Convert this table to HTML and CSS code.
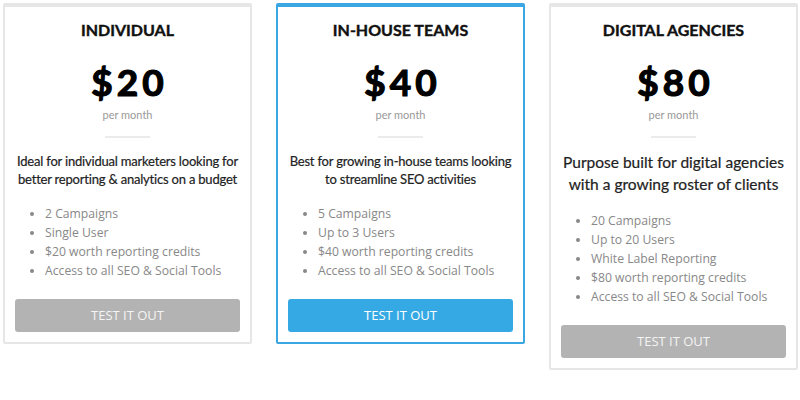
FILE: index.html
```html
<!DOCTYPE html>
<html>
<head>
<meta charset="utf-8">
<link rel="stylesheet" href="styles.css">
</head>
<body>
<div class="plans">
  <div class="card">
    <h2 class="title">INDIVIDUAL</h2>
    <div class="price">$20</div>
    <div class="period">per month</div>
    <div class="divider"></div>
    <p class="desc">Ideal for individual marketers looking for better reporting &amp; analytics on a budget</p>
    <ul class="features">
      <li>2 Campaigns</li>
      <li>Single User</li>
      <li>$20 worth reporting credits</li>
      <li>Access to all SEO &amp; Social Tools</li>
    </ul>
    <a class="btn">TEST IT OUT</a>
  </div>
  <div class="card featured">
    <h2 class="title">IN-HOUSE TEAMS</h2>
    <div class="price">$40</div>
    <div class="period">per month</div>
    <div class="divider"></div>
    <p class="desc">Best for growing in-house teams looking to streamline SEO activities</p>
    <ul class="features">
      <li>5 Campaigns</li>
      <li>Up to 3 Users</li>
      <li>$40 worth reporting credits</li>
      <li>Access to all SEO &amp; Social Tools</li>
    </ul>
    <a class="btn btn-primary">TEST IT OUT</a>
  </div>
  <div class="card">
    <h2 class="title">DIGITAL AGENCIES</h2>
    <div class="price">$80</div>
    <div class="period">per month</div>
    <div class="divider"></div>
    <p class="desc desc-large">Purpose built for digital agencies with a growing roster of clients</p>
    <ul class="features">
      <li>20 Campaigns</li>
      <li>Up to 20 Users</li>
      <li>White Label Reporting</li>
      <li>$80 worth reporting credits</li>
      <li>Access to all SEO &amp; Social Tools</li>
    </ul>
    <a class="btn">TEST IT OUT</a>
  </div>
</div>
</body>
</html>
```
FILE: styles.css
```css
* { box-sizing: border-box; }
body {
  margin: 0;
  background: #ffffff;
  font-family: "Lato", "Open Sans", sans-serif;
}
.plans {
  display: grid;
  grid-template-columns: repeat(3, 249px);
  column-gap: 24px;
  align-items: start;
  padding: 3px 0 0 3px;
}
.card {
  border: 2px solid #e6e6e6;
  border-top-width: 4px;
  border-radius: 2px;
  padding: 0 10px 10px;
  display: flex;
  flex-direction: column;
  align-items: center;
  text-align: center;
}
.card.featured {
  border-color: #3aa7e2;
}
.title {
  margin: 13px 0 0;
  font-size: 16px;
  line-height: 20px;
  font-weight: 700;
  -webkit-text-stroke: 0.4px #111;
  color: #111;
}
.price {
  margin-top: 22px;
  font-size: 37px;
  line-height: 40px;
  font-weight: 700;
  letter-spacing: 4px;
  padding-left: 4px;
  -webkit-text-stroke: 1.2px #000;
  color: #000;
}
.period {
  margin-top: 6px;
  font-size: 11px;
  line-height: 14px;
  color: #999;
}
.divider {
  width: 45px;
  height: 2px;
  background: #ebebeb;
  margin-top: 14px;
}
.desc {
  margin: 14px 0 0;
  font-size: 13px;
  letter-spacing: -0.2px;
  line-height: 18px;
  -webkit-text-stroke: 0.2px #222;
  color: #222;
}
.desc-large {
  font-size: 15.5px;
  letter-spacing: 0;
  line-height: 21.5px;
}
.features {
  align-self: stretch;
  text-align: left;
  margin: 16px 0 0;
  padding: 0 0 0 30px;
  font-family: "Open Sans", sans-serif;
  font-size: 12.2px;
  line-height: 19px;
  color: #888;
}
.btn {
  align-self: stretch;
  margin-top: 19px;
  height: 33px;
  border-radius: 3px;
  background: #b3b3b3;
  color: #f4f4f4;
  font-family: "Open Sans", sans-serif;
  font-size: 13px;
  line-height: 33px;
  text-align: center;
}
.btn-primary {
  background: #35a9e3;
  color: #fff;
}
```
